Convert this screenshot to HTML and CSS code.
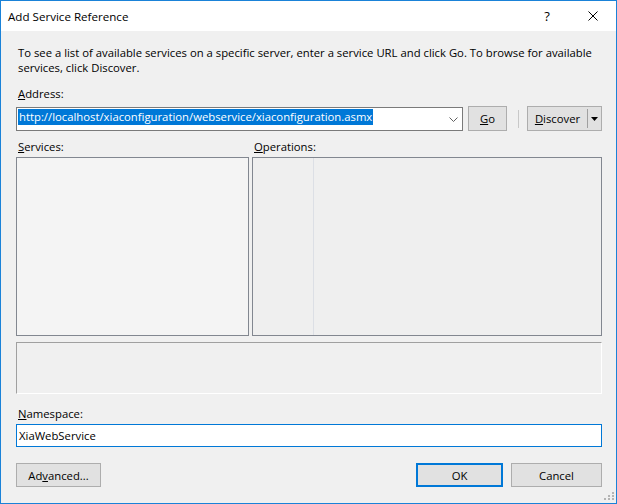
FILE: index.html
```html
<!DOCTYPE html>
<html>
<head>
<meta charset="utf-8">
<link rel="stylesheet" href="styles.css">
</head>
<body>
<div class="win">
  <div class="titlebar">
    <span class="title">Add Service Reference</span>
    <span class="cap-btn help">?</span>
    <span class="cap-btn close"><svg width="10" height="10" viewBox="0 0 10 10"><path d="M0.5 0.5 L9.5 9.5 M9.5 0.5 L0.5 9.5" stroke="#000" stroke-width="1" fill="none"/></svg></span>
  </div>
  <div class="content">
    <p class="intro">To see a list of available services on a specific server, enter a service URL and click Go. To browse for available<br>services, click Discover.</p>
    <div class="lbl lbl-address"><u>A</u>ddress:</div>
    <div class="addr-row">
      <div class="combo">
        <span class="sel">http://localhost/xiaconfiguration/webservice/xiaconfiguration.asmx</span>
        <svg class="chev" width="9" height="5" viewBox="0 0 9 5"><path d="M0.5 0.5 L4.5 4.5 L8.5 0.5" stroke="#606060" stroke-width="1" fill="none"/></svg>
      </div>
      <div class="btn go"><u>G</u>o</div>
      <div class="vsep"></div>
      <div class="btn split">
        <span class="split-main"><u>D</u>iscover</span>
        <span class="split-arrow"><svg width="7" height="4" viewBox="0 0 7 4"><path d="M0 0 H7 L3.5 4 Z" fill="#000"/></svg></span>
      </div>
    </div>
    <div class="lists">
      <div class="col col-services">
        <div class="lbl"><u>S</u>ervices:</div>
        <div class="listbox services"></div>
      </div>
      <div class="col col-ops">
        <div class="lbl lbl-ops"><u>O</u>perations:</div>
        <div class="listbox ops"><div class="ops-left"></div></div>
      </div>
    </div>
    <div class="desc"></div>
    <div class="lbl lbl-ns"><u>N</u>amespace:</div>
    <div class="ns">XiaWebService</div>
    <div class="footer">
      <div class="btn adv">Ad<u>v</u>anced...</div>
      <div class="spacer"></div>
      <div class="btn ok">OK</div>
      <div class="btn cancel">Cancel</div>
    </div>
  </div>
  <svg class="grip" width="10" height="9" viewBox="0 0 10 9">
    <rect x="8" y="0" width="2" height="2" fill="#b4b4b4"/>
    <rect x="4" y="3" width="2" height="2" fill="#b4b4b4"/>
    <rect x="8" y="3" width="2" height="2" fill="#b4b4b4"/>
    <rect x="0" y="6" width="2" height="2" fill="#b4b4b4"/>
    <rect x="4" y="6" width="2" height="2" fill="#b4b4b4"/>
    <rect x="8" y="6" width="2" height="2" fill="#b4b4b4"/>
  </svg>
</div>
</body>
</html>
```
FILE: styles.css
```css
html, body {
  margin: 0;
  padding: 0;
  background: #f0f0f0;
}
.win {
  position: relative;
  width: 617px;
  height: 504px;
  box-sizing: border-box;
  border: 1px solid #1a82d8;
  background: #f0f0f0;
  display: flex;
  flex-direction: column;
  font-family: "Open Sans", "Noto Sans", sans-serif;
  font-size: 11.3px;
  color: #000;
}
.titlebar {
  height: 30px;
  background: #fff;
  display: flex;
  align-items: center;
  padding-left: 7px;
  flex: none;
}
.title {
  flex: 1;
  font-size: 11.6px;
}
.cap-btn {
  width: 46px;
  height: 30px;
  display: flex;
  align-items: center;
  justify-content: center;
}
.help {
  font-size: 13px;
}
.content {
  padding: 0 14px 0 15px;
  display: flex;
  flex-direction: column;
}
.intro {
  margin: 14px 0 0 2px;
  line-height: 15px;
  white-space: nowrap;
}
.lbl {
  line-height: 15px;
  margin-left: 2px;
  white-space: nowrap;
}
.lbl-address {
  margin-top: 11px;
}
.addr-row {
  margin-top: 5px;
  height: 25px;
  display: flex;
  align-items: flex-start;
}
.combo {
  width: 447px;
  height: 24px;
  margin-top: 1px;
  box-sizing: border-box;
  border: 1px solid #7a7a7a;
  background: #fff;
  display: flex;
  align-items: flex-start;
  position: relative;
}
.sel {
  margin: 1px 0 0 1px;
  background: #0078d7;
  color: #fff;
  line-height: 16px;
  padding: 0 1px;
  white-space: nowrap;
}
.chev {
  margin-left: auto;
  margin-right: 4px;
  margin-top: 9px;
}
.btn {
  box-sizing: border-box;
  border: 1px solid #adadad;
  background: #e1e1e1;
  display: flex;
  align-items: center;
  justify-content: center;
  white-space: nowrap;
}
.go {
  margin-left: 5px;
  width: 39px;
  height: 25px;
}
.vsep {
  width: 1px;
  height: 18px;
  margin: 4px 8px 0 11px;
  background: #c8c8c8;
}
.split {
  width: 75px;
  height: 25px;
  justify-content: flex-start;
  align-items: stretch;
}
.split-main {
  width: 59px;
  display: flex;
  align-items: center;
  justify-content: center;
  border-right: 1px solid #a0a0a0;
  margin: 2px 0;
}
.split-arrow {
  flex: 1;
  display: flex;
  align-items: center;
  justify-content: center;
}
.lists {
  margin-top: 8px;
  display: flex;
  gap: 3px;
}
.col {
  display: flex;
  flex-direction: column;
}
.col-services {
  width: 233px;
}
.col-ops {
  width: 350px;
}
.listbox {
  margin-top: 3px;
  height: 179px;
  box-sizing: border-box;
  border: 1px solid #828790;
}
.services {
  background: #f4f4f4;
}
.ops {
  background: #efefef;
}
.ops-left {
  width: 60px;
  height: 100%;
  border-right: 1px solid #dcdfe5;
}
.desc {
  margin-top: 6px;
  height: 52px;
  box-sizing: border-box;
  border-top: 1px solid #a0a0a0;
  border-left: 1px solid #a0a0a0;
  border-right: 1px solid #fff;
  border-bottom: 1px solid #fff;
}
.lbl-ns {
  margin-top: 12px;
}
.ns {
  margin-top: 3px;
  height: 23px;
  box-sizing: border-box;
  border: 1px solid #0078d7;
  background: #fff;
  padding-left: 2px;
  display: flex;
  align-items: center;
}
.footer {
  margin-top: 16px;
  display: flex;
}
.footer .btn {
  height: 24px;
}
.adv {
  width: 85px;
}
.spacer {
  flex: 1;
}
.ok {
  width: 87px;
  border: 2px solid #0078d7;
}
.cancel {
  width: 91px;
  margin-left: 8px;
}
.grip {
  position: absolute;
  right: 2px;
  bottom: 2px;
}
```
